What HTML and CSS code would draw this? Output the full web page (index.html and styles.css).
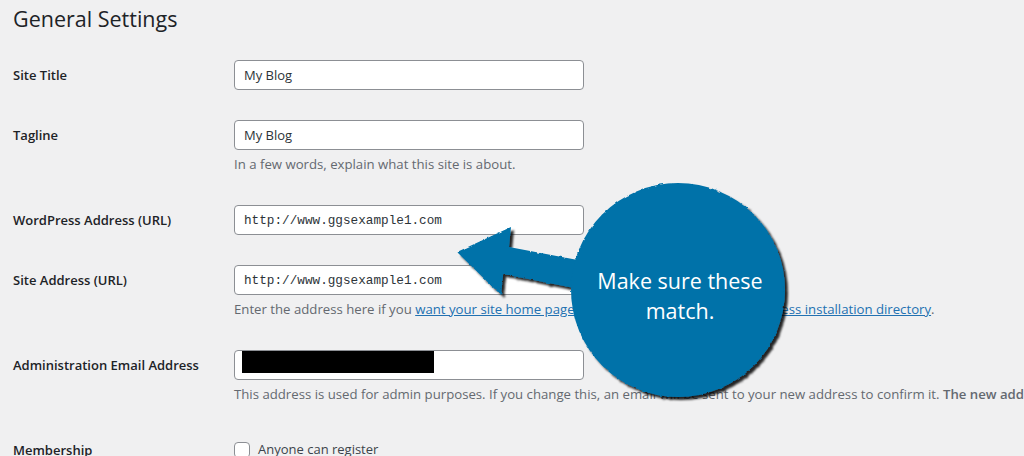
FILE: index.html
```html
<!DOCTYPE html>
<html lang="en">
<head>
    <meta charset="UTF-8">
    <meta name="viewport" content="width=device-width, initial-scale=1.0">
    <title>General Settings</title>
    <link rel="stylesheet" href="styles.css">
</head>
<body>
    <div class="wrap">
        <h1>General Settings</h1>

        <form class="form-table">
            <div class="row">
                <label class="row-label" for="blogname">Site Title</label>
                <div class="row-field">
                    <input class="regular-text" type="text" id="blogname" value="My Blog">
                </div>
            </div>

            <div class="row">
                <label class="row-label" for="blogdescription">Tagline</label>
                <div class="row-field">
                    <input class="regular-text" type="text" id="blogdescription" value="My Blog">
                    <p class="description">In a few words, explain what this site is about.</p>
                </div>
            </div>

            <div class="row">
                <label class="row-label" for="siteurl">WordPress Address (URL)</label>
                <div class="row-field">
                    <input class="regular-text code" type="url" id="siteurl" value="http://www.ggsexample1.com">
                </div>
            </div>

            <div class="row">
                <label class="row-label" for="home">Site Address (URL)</label>
                <div class="row-field">
                    <input class="regular-text code" type="url" id="home" value="http://www.ggsexample1.com">
                    <p class="description">Enter the address here if you <a href="#">want your site home page to be different from your WordPress installation directory</a>.</p>
                </div>
            </div>

            <div class="row">
                <label class="row-label" for="new_admin_email">Administration Email Address</label>
                <div class="row-field">
                    <input class="regular-text redacted" type="email" id="new_admin_email" value="">
                    <p class="description nowrap">This address is used for admin purposes. If you change this, an email will be sent to your new address to confirm it. <strong>The new address will not become active until confirmed.</strong></p>
                </div>
            </div>

            <div class="row">
                <span class="row-label">Membership</span>
                <div class="row-field">
                    <label class="check" for="users_can_register">
                        <input type="checkbox" id="users_can_register">
                        Anyone can register
                    </label>
                </div>
            </div>
        </form>

        <!-- callout drawn over the form -->
        <div class="callout">
            <svg width="370" height="245" viewBox="440 170 370 245">
                <defs>
                    <filter id="brush" x="-10%" y="-10%" width="125%" height="125%">
                        <feTurbulence type="fractalNoise" baseFrequency="0.22" numOctaves="2" seed="3" result="noise"/>
                        <feDisplacementMap in="SourceGraphic" in2="noise" scale="2.5" xChannelSelector="R" yChannelSelector="G" result="rough"/>
                        <feDropShadow in="rough" dx="3" dy="3" stdDeviation="1.3" flood-color="#000" flood-opacity="0.85"/>
                    </filter>
                </defs>
                <g class="callout-shape" filter="url(#brush)">
                    <polygon points="457,252 511,227 509,247 620,268 620,297 503,274 501,295"/>
                    <circle cx="678" cy="290" r="107"/>
                </g>
                <text class="callout-text" x="680" y="289">Make sure these</text>
                <text class="callout-text" x="680" y="319">match.</text>
            </svg>
        </div>
    </div>
</body>
</html>
```

FILE: styles.css
```css
body {
    margin: 0;
    background: #f0f0f1;
    color: #1d2327;
    font-family: 'Open Sans', 'Noto Sans', sans-serif;
    font-size: 13px;
    overflow: hidden;
}
.wrap {
    position: relative;
    padding-left: 13px;
}
h1 {
    margin: 0;
    padding: 5px 0 0;
    font-size: 21.5px;
    font-weight: 400;
    line-height: 28px;
    color: #1d2327;
}
.form-table {
    margin-top: 12px;
}
.row {
    display: grid;
    grid-template-columns: 221px 1fr;
    padding: 15px 0;
}
.row-label {
    padding-top: 7px;
    font-weight: 600;
    line-height: 17px;
    color: #1d2327;
}
.row-field {
    min-width: 0;
}
.regular-text {
    box-sizing: border-box;
    display: block;
    width: 350px;
    height: 30px;
    margin: 0;
    padding: 0 9px;
    border: 1px solid #8c8f94;
    border-radius: 4px;
    background: #fff;
    color: #2c3338;
    font-family: 'Open Sans', 'Noto Sans', sans-serif;
    font-size: 13px;
    line-height: 28px;
    outline: none;
}
.regular-text.code {
    font-family: 'Liberation Mono', 'DejaVu Sans Mono', monospace;
    font-size: 12.7px;
    padding-left: 9px;
}
.redacted {
    background: #fff linear-gradient(#000, #000) no-repeat 7px 0 / 192px 22px;
}
.description {
    margin: 4px 0 0;
    font-size: 13.2px;
    line-height: 21px;
    color: #646970;
}
.description a {
    color: #2271b1;
}
.description strong {
    font-weight: 600;
}
.nowrap {
    white-space: nowrap;
}
.check {
    display: flex;
    align-items: center;
    gap: 8px;
    margin-top: 6px;
    color: #3c434a;
    line-height: 17px;
}
.check input {
    appearance: none;
    box-sizing: border-box;
    width: 16px;
    height: 16px;
    margin: 0;
    border: 1px solid #8c8f94;
    border-radius: 4px;
    background: #fff;
}
.callout {
    position: absolute;
    left: 440px;
    top: 170px;
    width: 370px;
    height: 245px;
}
.callout svg {
    display: block;
    overflow: visible;
}
.callout-shape {
    fill: #0072a9;
}
.callout-text {
    fill: #fff;
    font-family: 'Open Sans', 'Noto Sans', sans-serif;
    font-size: 21.5px;
    text-anchor: middle;
}
```
